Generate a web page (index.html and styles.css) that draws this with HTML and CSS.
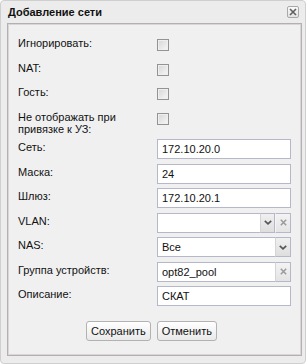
FILE: index.html
```html
<!DOCTYPE HTML>
<html lang="ru">
<head>
	<title>Добавление сети</title>
	<meta charset="utf-8">
	<link rel="stylesheet" href="styles.css">
</head>
<body>
	<div class="window">
		<div class="window-header">
			<span class="window-title">Добавление сети</span>
			<span class="tool-close">
				<svg width="8" height="8" viewBox="0 0 8 8"><path d="M1 1L7 7M7 1L1 7" stroke="#5f5f5f" stroke-width="1.6"/></svg>
			</span>
		</div>

		<div class="window-body">
			<div class="form">
				<div class="form-row">
					<label class="form-label">Игнорировать:</label>
					<div class="form-field"><span class="checkbox"></span></div>
				</div>
				<div class="form-row">
					<label class="form-label">NAT:</label>
					<div class="form-field"><span class="checkbox"></span></div>
				</div>
				<div class="form-row">
					<label class="form-label">Гость:</label>
					<div class="form-field"><span class="checkbox"></span></div>
				</div>
				<div class="form-row">
					<label class="form-label">Не отображать при привязке к УЗ:</label>
					<div class="form-field"><span class="checkbox"></span></div>
				</div>
				<div class="form-row">
					<label class="form-label">Сеть:</label>
					<div class="form-field"><div class="text-input">172.10.20.0</div></div>
				</div>
				<div class="form-row">
					<label class="form-label">Маска:</label>
					<div class="form-field"><div class="text-input">24</div></div>
				</div>
				<div class="form-row">
					<label class="form-label">Шлюз:</label>
					<div class="form-field"><div class="text-input">172.10.20.1</div></div>
				</div>
				<div class="form-row">
					<label class="form-label">VLAN:</label>
					<div class="form-field">
						<div class="text-input with-trigger"></div>
						<span class="trigger trigger-arrow"><svg width="8" height="5" viewBox="0 0 8 5"><path d="M0.8 0.8L4 3.8L7.2 0.8" fill="none" stroke="#555" stroke-width="1.7"/></svg></span>
						<span class="trigger trigger-clear"><svg width="7" height="7" viewBox="0 0 7 7"><path d="M0.8 0.8L6.2 6.2M6.2 0.8L0.8 6.2" stroke="#9a9a9a" stroke-width="1.5"/></svg></span>
					</div>
				</div>
				<div class="form-row">
					<label class="form-label">NAS:</label>
					<div class="form-field">
						<div class="text-input with-trigger">Все</div>
						<span class="trigger trigger-arrow wide"><svg width="8" height="5" viewBox="0 0 8 5"><path d="M0.8 0.8L4 3.8L7.2 0.8" fill="none" stroke="#555" stroke-width="1.7"/></svg></span>
					</div>
				</div>
				<div class="form-row">
					<label class="form-label">Группа устройств:</label>
					<div class="form-field">
						<div class="text-input with-trigger">opt82_pool</div>
						<span class="trigger trigger-clear wide"><svg width="7" height="7" viewBox="0 0 7 7"><path d="M0.8 0.8L6.2 6.2M6.2 0.8L0.8 6.2" stroke="#9a9a9a" stroke-width="1.5"/></svg></span>
					</div>
				</div>
				<div class="form-row">
					<label class="form-label">Описание:</label>
					<div class="form-field"><div class="text-input">СКАТ</div></div>
				</div>
			</div>

			<div class="buttons">
				<button class="btn">Сохранить</button>
				<button class="btn">Отменить</button>
			</div>
		</div>
	</div>
</body>
</html>
```

FILE: styles.css
```css
html {
	height: 100%;
}

body {
	margin: 0;
	padding: 0;
	background: #ffffff;
	color: #111111;
	font-family: "Liberation Sans", Arial, sans-serif;
	font-size: 11px;
}

.window {
	box-sizing: border-box;
	width: 306px;
	height: 364px;
	border: 1px solid #cfcfcf;
	border-radius: 4px;
	background: #ececec;
	padding: 0 3px 7px 6px;
	display: flex;
	flex-direction: column;
}

.window-header {
	height: 22px;
	display: flex;
	align-items: center;
	justify-content: space-between;
	padding: 0 3px 0 1px;
	flex: none;
}

.window-title {
	font-weight: bold;
	font-size: 11px;
	color: #111111;
	margin-top: -1px;
}

.tool-close {
	box-sizing: border-box;
	width: 12px;
	height: 12px;
	border: 1px solid #a9a9a9;
	border-radius: 2px;
	background: linear-gradient(#fafafa, #e2e2e2);
	display: flex;
	align-items: center;
	justify-content: center;
	margin-top: -1px;
}

.window-body {
	flex: 1;
	border: 1px solid #b3afb3;
	box-shadow: inset 0 0 0 1px #d9d5d9;
	background: #f0f0f0;
	padding: 11px 10px 0 10px;
	display: flex;
	flex-direction: column;
}

.form {
	display: flex;
	flex-direction: column;
	gap: 4.5px;
}

.form-row {
	display: flex;
	min-height: 20px;
}

.form-label {
	width: 139px;
	flex: none;
	line-height: 12px;
	padding-top: 2px;
	padding-right: 20px;
	box-sizing: border-box;
}

.form-field {
	width: 135px;
	height: 20px;
	display: flex;
	align-items: center;
}

.checkbox {
	box-sizing: border-box;
	width: 12px;
	height: 12px;
	border: 1px solid #939393;
	background: linear-gradient(135deg, #d6d6d6, #f7f7f7);
	box-shadow: inset 0 0 0 1px #efefef;
}

.text-input {
	box-sizing: border-box;
	flex: 1;
	height: 20px;
	border: 1px solid #b5b8c8;
	background: #ffffff;
	padding: 0 4px;
	line-height: 18px;
	font-size: 11px;
	color: #111111;
}

.text-input.with-trigger {
	border-right: none;
}

.trigger {
	box-sizing: border-box;
	width: 15px;
	height: 20px;
	border: 1px solid #b5b8c8;
	border-left: 1px solid #d4d4d8;
	background: linear-gradient(#f0f0f0, #dedede);
	display: flex;
	align-items: center;
	justify-content: center;
}

.trigger.wide {
	width: 16px;
}

.trigger-clear {
	width: 16px;
	background: linear-gradient(#f3f3f3, #e4e4e4);
}

.trigger-arrow + .trigger-clear {
	border-left: 1px solid #f5f5f5;
}

.buttons {
	display: flex;
	justify-content: center;
	gap: 6px;
	margin-top: 15px;
	padding-right: 6px;
}

.btn {
	box-sizing: border-box;
	height: 20px;
	padding: 0 4px;
	border: 1px solid #b2b2b2;
	border-radius: 3px;
	background: linear-gradient(#ffffff, #e9e9e9);
	font-family: "Liberation Sans", Arial, sans-serif;
	font-size: 11px;
	color: #111111;
}
```
